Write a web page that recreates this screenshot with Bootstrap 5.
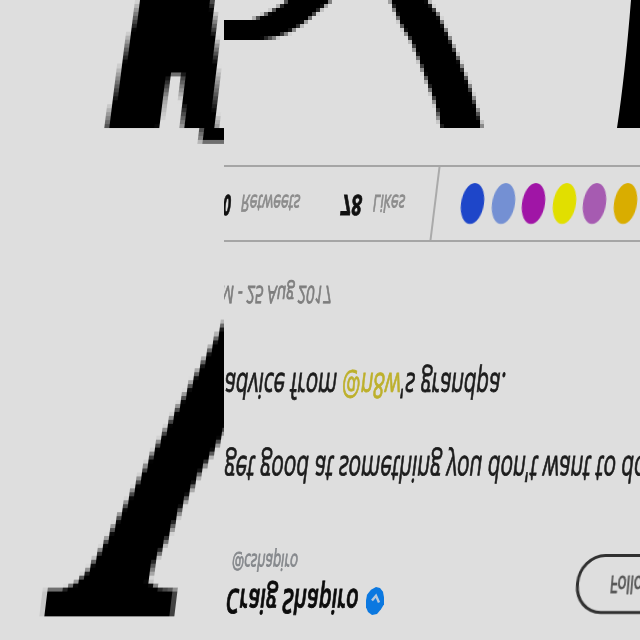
<!DOCTYPE html>
<html lang="en">
<head>
<meta charset="utf-8">
<meta name="viewport" content="width=device-width, initial-scale=1">
<title>Craig Shapiro</title>
<link href="https://cdn.jsdelivr.net/npm/bootstrap@5.3.0/dist/css/bootstrap.min.css" rel="stylesheet">
<style>
  body { background: #dedede; font-family: "Open Sans", "Noto Sans", sans-serif; color: #1c1c1c; }
  .stage { width: 640px; height: 640px; }
  .art { inset: 0; width: 640px; height: 640px; }
  canvas.art { image-rendering: pixelated; }
  canvas.slanted { transform: skewX(-7deg); transform-origin: 0 0; }
  .clip-left { inset: 0 auto 0 0; width: 224px; height: 640px; }
  .gutter { width: 224px; }
  .tweet { width: 416px; }
  /* a line of mirrored, slanted text, fitted to its data-w */
  .flip { height: 1em; line-height: 1; white-space: nowrap; filter: blur(.55px); flex: none; -webkit-text-stroke: .9px currentColor; }
  .flip > span { display: inline-block; white-space: pre; line-height: 1; vertical-align: top; transform-origin: left center; }
  .stats { margin-top: 165px; height: 77px; border-top: 2px solid #a5a5a5; border-bottom: 2px solid #a5a5a5; }
  .s-label { font-size: 23px; color: #8c8c8c; }
  .s-num { font-size: 28px; font-weight: 700; color: #111; }
  .num0 { margin-left: -9px; }
  .num1 { margin-left: 41px; }
  .lab0 { margin-left: 10px; }
  .lab1 { margin-left: 11px; }
  .stat-line { padding-top: 25px; width: 210px; }
  .rule { width: 2px; height: 73px; background: #aaa; transform: skewX(-7deg); }
  .faces { margin-left: 25px; gap: 7.6px; }
  .face { width: 23px; height: 41px; border-radius: 50%; transform: skewX(-7deg); filter: blur(.6px); flex: none; }
  .f1 { background: #1e46c9; } .f2 { background: #7490d3; } .f3 { background: #a015a6; }
  .f4 { background: #e1df00; } .f5 { background: #a65bb1; } .f6 { background: #d9ad00; }
  .date { font-size: 24px; color: #7e7e7e; margin-top: 41px; margin-left: -13px; }
  .line1 { font-size: 35px; margin-top: 62px; }
  .line2 { font-size: 36px; margin-top: 47px; }
  .tag { color: #bdb02c; }
  .foot { margin-top: 64px; }
  .handle { font-size: 23px; color: #85888c; margin-left: 8px; }
  .who { font-size: 34px; font-weight: 600; color: #0c0c0c; margin-top: 11px; margin-left: 2px; }
  .tick { width: 20px; height: 33px; margin-left: 7px; filter: blur(.4px); }
  .follow { width: 130px; height: 60px; margin: 3px -66px 0 0; border: 3px solid #303030; border-radius: 27px / 29px; transform: skewX(-5deg); filter: blur(.5px); padding: 16px 0 0 31px; flex: none; }
  .follow .flip { font-size: 24px; color: #505050; filter: none; }
</style>
</head>
<body>
<main class="stage position-relative overflow-hidden d-flex">
  <div class="clip-left position-absolute overflow-hidden">
    <canvas class="art slanted position-absolute" id="lettersLeft" width="128" height="160"></canvas>
  </div>
  <canvas class="art position-absolute" id="letters" width="160" height="160"></canvas>
  <svg class="art position-absolute" viewBox="0 0 640 640" aria-hidden="true">
    <path d="M631 0H640V128H617Q625 75 631 0Z"/>
  </svg>
  <div class="gutter flex-shrink-0"></div>
  <section class="tweet position-relative overflow-hidden d-flex flex-column flex-shrink-0">
    <div class="stats d-flex flex-shrink-0">
      <div class="stat-line d-flex flex-shrink-0">
        <div class="flip s-num num0" data-w="16"><span>10</span></div>
        <div class="flip s-label lab0" data-w="59"><span>Retweets</span></div>
        <div class="flip s-num num1" data-w="21"><span>78</span></div>
        <div class="flip s-label lab1" data-w="32"><span>Likes</span></div>
      </div>
      <div class="rule flex-shrink-0"></div>
      <div class="faces d-flex align-items-center">
        <span class="face f1"></span><span class="face f2"></span><span class="face f3"></span><span class="face f4"></span><span class="face f5"></span><span class="face f6"></span>
      </div>
    </div>
    <div class="flip date" data-w="121"><span>AM - 25 Aug 2017</span></div>
    <div class="flip line1" data-w="281"><span>advice from <span class="tag">@n8w</span>'s grandpa.</span></div>
    <div class="flip line2" data-w="422"><span>get good at something you don't want to do</span></div>
    <div class="foot d-flex justify-content-between">
      <div>
        <div class="flip handle" data-w="66"><span>@cshapiro</span></div>
        <div class="d-flex">
          <div class="flip who" data-w="132"><span>Craig Shapiro</span></div>
          <svg class="tick mt-2 pt-1" viewBox="0 0 20 30" preserveAspectRatio="none" aria-hidden="true">
            <path d="M11 1l4 1 3 4 1 6v7l-3 5-4 5-5 1-4-3-2-5V15l1-6 4-5z" fill="#0b78e0"/>
            <path d="M7 15l4-5 3 7" fill="none" stroke="#b9c9dc" stroke-width="2.4"/>
          </svg>
        </div>
      </div>
      <div class="follow"><div class="flip" data-w="44"><span>Follow</span></div></div>
    </div>
  </section>
</main>
<script src="https://cdn.jsdelivr.net/npm/bootstrap@5.3.0/dist/js/bootstrap.bundle.min.js"></script>
<script>
  // fit each mirrored line to its width
  document.querySelectorAll('.flip').forEach(function (el) {
    var t = el.firstElementChild, w = +el.dataset.w;
    var slant = el.closest('.follow') ? '' : 'skewX(-7deg) ';
    t.style.transform = slant + 'scale(' + w / t.offsetWidth + ',-1)';
    el.style.width = w + 'px';
  });
  function draw(c, shapes) {
    shapes.forEach(function (p) {
      c.beginPath();
      for (var i = 0; i < p.length; i += 2) c.lineTo(p[i], p[i + 1]);
      c.closePath();
      c.fill();
    });
  }
  // left letterforms: slanted cells, five by four screen pixels;
  // the drawing undoes the slant that the canvas element applies
  var left = document.getElementById('lettersLeft').getContext('2d');
  left.scale(0.2, 0.25);
  left.transform(1, 0, Math.tan(7 * Math.PI / 180), 1, 0, 0);
  draw(left, [
    [140,0, 131,32, 121,68, 112,104, 106,128, 159,128, 164,100, 171,74, 182,74, 183,128, 216,128, 217,60, 213,0],
    [201,128, 234,128, 234,142, 201,142],
    [232,308, 224,323, 200,367, 173,416, 147,464, 123,509, 107,539, 97,556, 87,572, 75,584, 62,590, 47,590, 44,616, 173,616, 176,590, 160,589, 148,582, 155,562, 167,540, 180,511, 200,473, 213,453, 224,433, 232,419]
  ]);
  // right letterforms: square cells of four screen pixels
  var right = document.getElementById('letters').getContext('2d');
  right.scale(0.25, 0.25);
  draw(right, [
    [224,20, 252,20, 268,13, 280,6, 288,0, 332,0, 321,9, 310,18, 300,26, 288,33, 273,38, 262,40, 224,40],
    [390,0, 401,25, 412,43, 420,63, 429,87, 435,103, 441,128, 482,128, 478,112, 470,87, 460,62, 450,39, 438,14, 427,0]
  ]);
</script>
</body>
</html>
